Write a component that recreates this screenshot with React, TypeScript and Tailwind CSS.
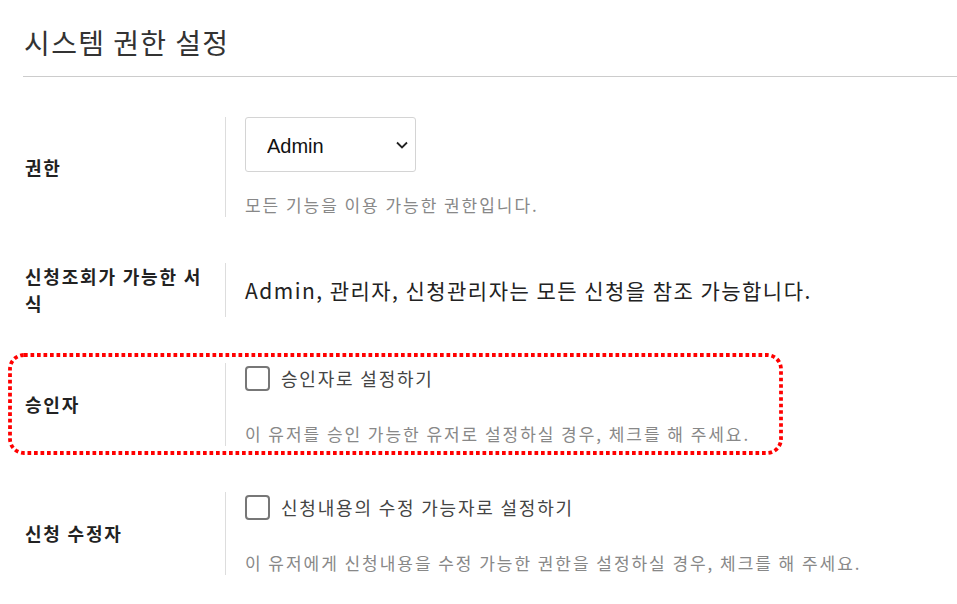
import { ReactNode } from 'react';

// ============================================================================
// Pieces
// ============================================================================

const FONT = "font-['Noto_Sans_CJK_KR','Noto_Sans',sans-serif]";

function Row({ label, children }: { label: ReactNode; children: ReactNode }) {
    return (
        <div className="flex items-center">
            <div className="w-[200px] shrink-0 pr-[20px] text-[18px] leading-[27px] font-bold text-[#222] tracking-[0.1em]">
                {label}
            </div>
            <div className="border-l border-[#ddd] pl-[19px]">{children}</div>
        </div>
    );
}

function Help({ children }: { children: ReactNode }) {
    return <p className="text-[17px] leading-[24px] text-[#888] tracking-[0.115em]">{children}</p>;
}

function Check({ label }: { label: string }) {
    return (
        <label className="flex items-center gap-[11px] h-[31px]">
            <span className="w-[25px] h-[25px] rounded-[4px] border-2 border-[#777] bg-white" />
            <span className="text-[18px] text-[#444] tracking-[0.1em]">{label}</span>
        </label>
    );
}

// ============================================================================
// Page
// ============================================================================

export default function App() {
    return (
        <div className={`${FONT} bg-white min-h-[604px] pl-[23px]`}>
            <h1 className="pt-[23px] pb-[15px] pl-[1px] text-[28px] leading-[38px] font-normal text-[#333] tracking-[0.05em]">
                시스템 권한 설정
            </h1>
            <hr className="border-t border-[#ccc]" />

            <div className="flex flex-col gap-[46px] pt-[40px] pl-[2px]">
                <Row label="권한">
                    <div className="relative w-[171px]">
                        <select className="appearance-none w-full h-[55px] pl-[21px] pt-[2px] rounded-[3px] border border-[#d4d4d4] bg-white text-[20px] text-[#111] font-['Liberation_Sans',Arial,sans-serif] outline-none">
                            <option>Admin</option>
                            <option>관리자</option>
                            <option>신청관리자</option>
                        </select>
                        <svg
                            className="absolute right-[7px] top-[23px] pointer-events-none"
                            width="14"
                            height="10"
                            viewBox="0 0 14 10"
                            fill="none"
                        >
                            <path d="M2 2.5l5 5 5-5" stroke="#222" strokeWidth="1.8" />
                        </svg>
                    </div>
                    <div className="mt-[21px]">
                        <Help>모든 기능을 이용 가능한 권한입니다.</Help>
                    </div>
                </Row>

                <Row label="신청조회가 가능한 서식">
                    <p className="text-[21px] leading-[54px] text-[#222] tracking-[0.07em]">
                        Admin, 관리자, 신청관리자는 모든 신청을 참조 가능합니다.
                    </p>
                </Row>

                <div className="relative">
                    <Row label="승인자">
                        <Check label="승인자로 설정하기" />
                        <div className="mt-[28px]">
                            <Help>이 유저를 승인 가능한 유저로 설정하실 경우, 체크를 해 주세요.</Help>
                        </div>
                    </Row>
                    {/* dotted annotation frame */}
                    <svg
                        className="absolute left-[-17px] top-[-10px] pointer-events-none"
                        width="776"
                        height="104"
                        viewBox="0 0 776 104"
                        fill="none"
                    >
                        <rect
                            x="2"
                            y="2"
                            width="771"
                            height="98"
                            rx="14"
                            stroke="#ff0000"
                            strokeWidth="3.8"
                            strokeDasharray="3.7 2.8"
                        />
                    </svg>
                </div>

                <Row label="신청 수정자">
                    <Check label="신청내용의 수정 가능자로 설정하기" />
                    <div className="mt-[28px]">
                        <Help>이 유저에게 신청내용을 수정 가능한 권한을 설정하실 경우, 체크를 해 주세요.</Help>
                    </div>
                </Row>
            </div>
        </div>
    );
}
